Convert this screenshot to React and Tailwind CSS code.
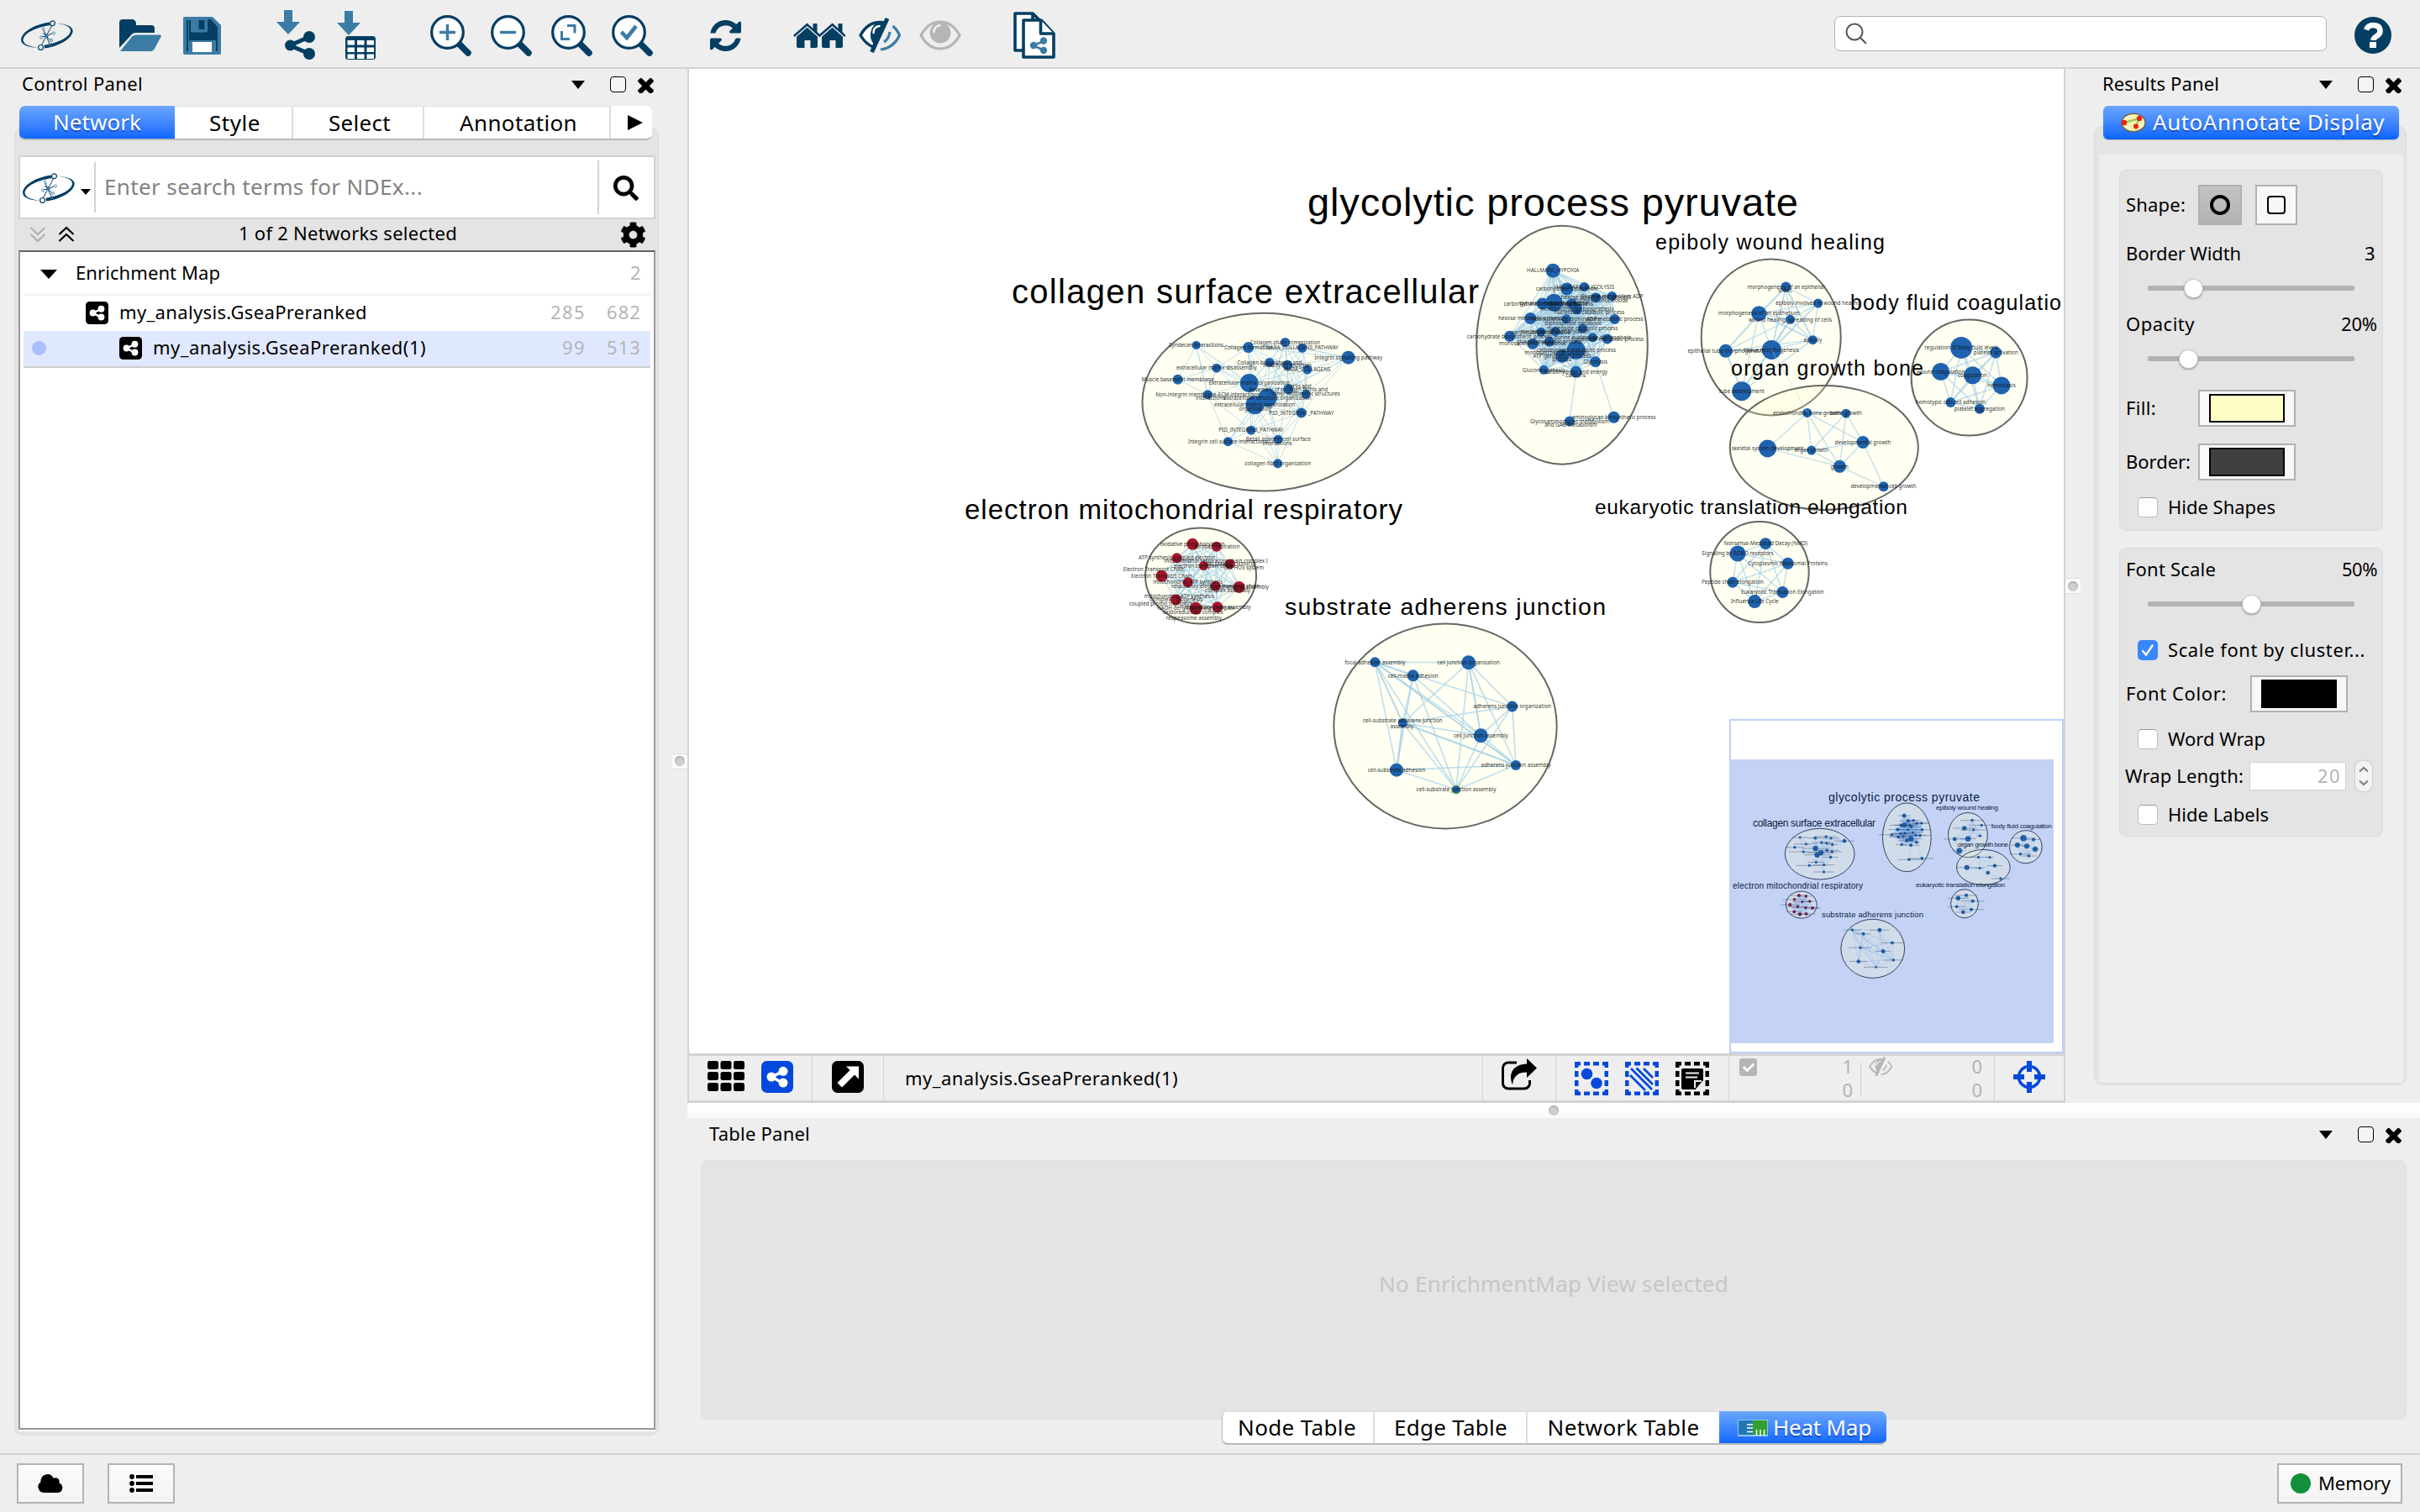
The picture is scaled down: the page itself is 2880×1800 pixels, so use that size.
import React, { useLayoutEffect, useRef, useState } from "react";
import { FaCog, FaSearch, FaCheck } from "react-icons/fa";

const NAVY = "#043e62";
const STEEL = "#3a7ca5";

/* Text whose tracking is adjusted so that it fills a given width. */
function Fit({ w, className = "", children }) {
  const ref = useRef(null);
  const [ls, setLs] = useState(0);
  useLayoutEffect(() => {
    const natural = ref.current.getBoundingClientRect().width;
    setLs((w - natural) / String(children).length);
  }, [w, children]);
  return (
    <span ref={ref} className={`inline-block shrink-0 -translate-y-px whitespace-nowrap ${className}`} style={{ letterSpacing: `${ls}px` }}>
      {children}
    </span>
  );
}

/* ---------- icons ---------- */

function CyLogo({ className = "" }) {
  return (
    <svg viewBox="0 0 64 36" width="64" height="36" className={`shrink-0 ${className}`} fill="none" stroke={NAVY}>
      <path d="M35 2.500C16 5 0 15 1.200 24.500c.6 4.500 8 8 19.500 8.300C9 31 3.500 28 3.600 23.500 4 16 18 8.500 35.500 6z" fill={NAVY} stroke="none" />
      <path d="M29 33.600C47 31 63.500 21 62.600 12 62 7.500 55 4.200 43 3.700 54.500 5 60 8 60 12.500 59.500 20 46 27 28.500 29.800z" fill={NAVY} stroke="none" />
      <circle cx="38.500" cy="3.800" r="2.900" strokeWidth="1.200" />
      <circle cx="24.500" cy="32.400" r="2.900" strokeWidth="1.200" />
      <path d="M37.500 6.800 31 19 25.500 29.500M31 19l-3-7M31 19l7-3M31 19l-5 1M31 19l5 5M31 19l4 9M31 19l-4-4" strokeWidth="1" />
      <circle cx="31.500" cy="18" r="1.800" fill={STEEL} stroke={STEEL} />
      <g strokeWidth="0.900" stroke={STEEL}>
        <circle cx="27.500" cy="10.500" r="1.400" />
        <circle cx="40" cy="15.500" r="1.500" />
        <circle cx="25" cy="20.500" r="1.500" />
        <circle cx="37" cy="24" r="1.500" />
        <circle cx="35.500" cy="29" r="1.400" />
      </g>
    </svg>
  );
}

function FolderIcon() {
  return (
    <svg viewBox="0 0 50 38" width="50" height="38" className="ml-[54px] shrink-0">
      <path d="M0 34V4a4 4 0 0 1 4-4h11a5 5 0 0 1 5 5v2h18a4 4 0 0 1 4 4v5H20a8 8 0 0 0-7 4z" fill={NAVY} />
      <path d="M1 38h37l3-1.500 9-16.500-1-1.500H19L15.500 20z" fill={STEEL} />
    </svg>
  );
}

function SaveIcon() {
  return (
    <svg viewBox="0 0 45 45" width="45" height="45" className="ml-[26px] shrink-0">
      <path d="M2 0h33l10 10v33a2 2 0 0 1-2 2H2a2 2 0 0 1-2-2V2a2 2 0 0 1 2-2z" fill={STEEL} />
      <path d="M4 4h2v37H4zM39 10l2 2v29h-2zM29 3h4l6 7v16H7V4h2v12a2.500 2.500 0 0 0 2.500 2.500h15A2.500 2.500 0 0 0 29 16z" fill={NAVY} />
      <rect x="18.500" y="4" width="7" height="11" fill={NAVY} />
      <path d="M7 26h32v2H9a2 2 0 0 0-2 2z" fill={NAVY} />
      <rect x="11" y="30" width="23" height="12" fill="#fff" />
    </svg>
  );
}

const SharePath = () => (
  <g>
    <circle cx="5.500" cy="17" r="6.500" />
    <circle cx="28" cy="7" r="7" />
    <circle cx="28" cy="27" r="7" />
    <path d="M5 17 28 7M5 17l23 10" strokeWidth="5" />
  </g>
);

function ImportNetworkIcon() {
  return (
    <svg viewBox="0 0 47 60" width="47" height="60" className="ml-[66px] shrink-0">
      <path d="M9 0h10v14h9L14 29 0 14h9z" fill={STEEL} />
      <g transform="translate(11 25)" fill={NAVY} stroke={NAVY} strokeWidth="0">
        <SharePath />
      </g>
    </svg>
  );
}

function ImportTableIcon() {
  return (
    <svg viewBox="0 0 47 60" width="47" height="60" className="ml-[25px] shrink-0">
      <path d="M9 1h10v14h9L14 30 0 15h9z" fill={STEEL} />
      <rect x="10" y="31" width="36" height="28" rx="3.500" fill={NAVY} />
      {[36, 44.5, 52.5].map((y) =>
        [12.500, 24, 35.500].map((x) => <rect key={`${x}-${y}`} x={x} y={y} width="8.500" height="5.500" fill="#fff" />)
      )}
    </svg>
  );
}

function ZoomIcon({ className, children }) {
  return (
    <svg viewBox="0 0 49 49" width="49" height="49" className={`shrink-0 ${className}`}>
      <path d="M34 34l11 11" stroke={NAVY} strokeWidth="7.500" strokeLinecap="round" />
      <circle cx="20.500" cy="20.500" r="18.800" fill="#fff" stroke={NAVY} strokeWidth="3.200" />
      <g fill="none" stroke={STEEL} strokeWidth="3.400">{children}</g>
    </svg>
  );
}

function RefreshIcon() {
  return (
    <svg viewBox="128 128 1536 1536" width="37" height="37" className="ml-[68px] shrink-0" fill={NAVY}>
      <path d="M1639 1056q0 5-1 7-64 268-268 434.500t-478 166.500q-146 0-282.500-55t-243.500-157l-129 129q-19 19-45 19t-45-19-19-45v-448q0-26 19-45t45-19h448q26 0 45 19t19 45-19 45l-137 137q71 66 161 102t187 36q134 0 250-65t186-179q11-17 53-117 8-23 30-23h192q13 0 22.500 9.500t9.500 22.500zm25-800v448q0 26-19 45t-45 19h-448q-26 0-45-19t-19-45 19-45l138-138q-148-137-349-137-134 0-250 65t-186 179q-11 17-53 117-8 23-30 23h-199q-13 0-22.500-9.500t-9.500-22.500v-7q65-268 270-434.500t480-166.500q146 0 284 55.500t245 156.500l130-129q19-19 45-19t45 19 19 45z" />
    </svg>
  );
}

function HousesIcon() {
  const house = (
    <g>
      <path d="M4 16.500 16.500 5.500 29 16.500V28q0 2-2 2h-6.500v-9h-7v9H6q-2 0-2-2z" stroke="none" />
      <path d="M.8 16 16.500 2.200 32 16" fill="none" strokeWidth="2.600" />
      <path d="M23.500 1h5v11l-5-4.500z" stroke="none" />
      <path d="M3.500 16.500 16.500 5 29.500 16.500" fill="none" stroke="#eee" strokeWidth="1" />
    </g>
  );
  return (
    <svg viewBox="0 0 62 31" width="62" height="31" className="ml-[62px] shrink-0" fill={NAVY} stroke={NAVY}>
      {house}
      <g transform="translate(30 0)">{house}</g>
    </svg>
  );
}

function EyeSlash({ size = 50, dark = NAVY, light = STEEL, bg = "#fff", className = "" }) {
  return (
    <svg viewBox="0 0 50 42" width={size} height={size * 0.84} className={`shrink-0 ${className}`} fill="none">
      <path d="M2 21C8 10 16 5.500 25 5.500q4 0 7 .8L17 35Q8 31 2 21z" fill={bg} stroke={dark} strokeWidth="3.400" />
      <path d="M33 5 20 33c-10-6-7-26 5-28z" fill={dark} />
      <path d="M17.500 18q0-7 7-8" stroke={bg} strokeWidth="2.600" strokeLinecap="round" />
      <path d="M34 1 15.500 41" stroke={dark} strokeWidth="5" />
      <path d="M40.500 10q5 4 8 11-7 15-22.500 17M37 17q-1.500 9-7 12" stroke={light} strokeWidth="3.200" />
    </svg>
  );
}

function EyeIcon() {
  return (
    <svg viewBox="0 0 50 36" width="50" height="36" className="ml-[22px] shrink-0" fill="none">
      <path d="M2 18C8 7 16 2 25 2s17 5 23 16c-6 11-14 16-23 16S8 29 2 18z" stroke="#b5b5b5" strokeWidth="3.200" />
      <circle cx="25" cy="15" r="12.500" fill="#b5b5b5" />
      <path d="M17.500 14q0-6.500 7-8" stroke="#eee" strokeWidth="2.600" strokeLinecap="round" />
    </svg>
  );
}

function DocsIcon() {
  return (
    <svg viewBox="0 0 50 56" width="50" height="56" className="ml-[62px] shrink-0" fill="#fff" stroke={NAVY} strokeWidth="3.600" strokeLinejoin="round">
      <path d="M2 2h21l9 9v35H2z" />
      <path d="M23 2v9" />
      <path d="M12 10h21l15 16v28H12z" />
      <path d="M32.500 10v16H48" />
      <g fill={STEEL} stroke={STEEL} strokeWidth="2">
        <path d="M24 40l12-5M24 40l12 6" strokeWidth="2.600" />
        <circle cx="24" cy="40" r="3.200" />
        <circle cx="36" cy="34.500" r="3.200" />
        <circle cx="36" cy="46" r="3.200" />
      </g>
    </svg>
  );
}

function HelpIcon() {
  return (
    <svg viewBox="0 0 44 44" width="44" height="44" className="ml-[33px] shrink-0">
      <circle cx="22" cy="22" r="22" fill={NAVY} />
      <path d="M14 15.500Q16 10 22 10q8.500 0 8.500 7 0 3.500-4 6-4 2.300-4 5" fill="none" stroke="#fff" strokeWidth="6.500" />
      <rect x="18" y="30" width="8" height="7" fill="#fff" />
    </svg>
  );
}

const Down = ({ w = 16, h = 10, className = "" }) => (
  <svg viewBox="0 0 16 10" width={w} height={h} preserveAspectRatio="none" className={`shrink-0 ${className}`}>
    <path d="M0 0h16L8 10z" />
  </svg>
);

const Cross = () => (
  <svg viewBox="300 318 1192 1192" width="19" height="19" className="ml-[14px] mt-[2px] shrink-0">
    <path d="M1490 1322q0 40-28 68l-136 136q-28 28-68 28t-68-28l-294-294-294 294q-28 28-68 28t-68-28l-136-136q-28-28-28-68t28-68l294-294-294-294q-28-28-28-68t28-68l136-136q28-28 68-28t68 28l294 294 294-294q28-28 68-28t68 28l136 136q28 28 28 68t-28 68l-294 294 294 294q28 28 28 68z" />
  </svg>
);

function PanelHeader({ title, w, className }) {
  return (
    <div className={`flex items-center text-[22px] ${className}`}>
      <Fit w={w}>{title}</Fit>
      <Down className="ml-auto" />
      <span className="ml-[30px] h-[19px] w-[19px] shrink-0 rounded-[4px] border-[1.500px] border-black bg-[#f4f4f4]" />
      <Cross />
    </div>
  );
}

function ShareBox({ size, color, className = "" }) {
  return (
    <svg viewBox="0 0 38 38" width={size} height={size} className={`shrink-0 ${className}`}>
      <rect width="38" height="38" rx="6.500" fill={color} />
      <g fill="#fff" stroke="#fff" strokeWidth="0">
        <path d="M12 19 26 12.500M12 19l14 7.500" strokeWidth="3.400" />
        <circle cx="12" cy="19" r="5.500" />
        <circle cx="26" cy="12.300" r="5.500" />
        <circle cx="26" cy="26" r="5.500" />
      </g>
    </svg>
  );
}

function Chevrons({ up, color, className }) {
  return (
    <svg viewBox="0 0 20 20" width="20" height="20" className={`shrink-0 ${className}`} fill="none" stroke={color} strokeWidth="2.200">
      {up ? <path d="M1.500 10 10 2l8.500 8M1.500 18 10 10l8.500 8" /> : <path d="M1.500 2 10 10l8.500-8M1.500 10l8.500 8 8.500-8" />}
    </svg>
  );
}

/* ---------- network drawing ---------- */

/* Each cluster keeps its nodes in layout units: origin x, origin y, units per pixel in x and y. */
const A = [1140, 200, 1.823, 2.8];
const B = [1860, 200, 2.529, 2.8];
const C = [1500, 680, 3, 3];

const CLUSTERS = [
  {
    ellipse: [1859, 410.7, 101.8, 142], space: A, reach: 115, weight: 1.4, color: "#1f62ad",
    nodes: [
      [1291, 342, 8.5, "HALLMARK_HYPOXIA"], [1321, 403, 7.5, "carbohydrate catabolism"], [1359, 396, 5.5, "HALLMARK_GLYCOLYSIS"],
      [1384, 432, 6, "hexose biosynthetic process"], [1419, 427, 5.5, "Glucose metabolism ADP"], [1268, 452, 7, "carbohydrate catabolic process"],
      [1293, 449, 10.5, "pyruvate metabolic process"], [1331, 452, 6, "glycolytic process"], [1343, 470, 6.5, "monosaccharide biosynthesis"],
      [1242, 501, 7, "hexose metabolic process"], [1320, 503, 5.5, "ribonucleoside diphosphate"], [1425, 504, 6, "ADP metabolic process"],
      [1355, 535, 5.5, "nucleoside catabolic process"], [1265, 547, 5.5, "carbohydrate derivative"], [1296, 545, 5.5, "nucleotide phosphorylation"],
      [1197, 561, 6.5, "carbohydrate biosynthetic process"], [1377, 565, 5.5, "purine nucleoside diphosphate"], [1409, 570, 6, "nucleotide metabolic process"],
      [1247, 586, 6.5, "monosaccharide metabolic"], [1283, 579, 6, "glucose metabolic process"], [1341, 607, 11, "carbohydrate metabolic process"],
      [1311, 627, 8, "ATP generation process"], [1383, 646, 6.5, "Glycolysis"], [1271, 673, 5.5, "Gluconeogenesis"], [1341, 680, 7, "carbohydrate and energy"],
      [1327, 844, 6, "Glycosaminoglycan metabolism"], [1423, 831, 7, "aminoglycan biosynthetic process"],
    ],
    extra: [[24, 25], [22, 26], [25, 26]], lone: [25, 26],
    notes: [
      [1370, 482, "nucleotide catabolic process"], [1330, 857, "and GAG metabolism"], [1340, 692, "carbons"], [1310, 637, "process"],
      [1300, 615, "monosaccharide catabolic"], [1395, 441, "purine ribonucleoside"], [1335, 518, "diphosphate metabolic"],
    ],
  },
  {
    ellipse: [1504, 478.6, 144.5, 105.9], space: A, reach: 72, weight: 1, color: "#1f62ad",
    nodes: [
      [517, 591, 5, "Syndecan interactions"], [630, 598, 6.5, "Collagen formation"], [710, 581, 5.5, "Collagen chain trimerization"],
      [747, 600, 5.5, "NABA_COLLAGENS_PATHWAY"], [847, 632, 8, "Integrin signalling pathway"], [676, 648, 5.5, "Collagen biosynthesis and"],
      [715, 657, 6, "modifying enzymes"], [758, 672, 5.5, "NABA_COLLAGENS"], [561, 667, 5.5, "extracellular matrix disassembly"],
      [477, 705, 6, "Muscle basement membrane"], [632, 717, 11, "Extracellular matrix organization"], [542, 755, 5.5, "Non-integrin membrane-ECM interactions"],
      [717, 738, 6, "Assembly of collagen fibrils and"], [755, 754, 5.5, "other multimeric structures"], [672, 766, 11, "extracellular structure organization"],
      [644, 790, 11, "extracellular matrix organization"], [745, 816, 6, "PID_INTEGRIN1_PATHWAY"], [636, 874, 5.5, "PID_INTEGRIN3_PATHWAY"],
      [586, 912, 5.5, "Integrin cell surface interactions"], [695, 905, 5.5, "Beta1 integrin cell surface"], [694, 985, 5.5, "collagen fibril organization"],
    ],
    extra: [[0, 11], [0, 10], [9, 10], [4, 14], [4, 15], [4, 16], [14, 20], [15, 20], [14, 18], [15, 19], [1, 15], [2, 14], [3, 4], [1, 4], [14, 19], [18, 15], [6, 4], [0, 14]],
    notes: [[548, 768, "interactions"], [693, 917, "interactions"], [740, 728, "fibrils and"], [644, 803, "organization"]],
  },
  {
    ellipse: [1429, 685.5, 66, 57], space: A, reach: 200, weight: 1.3, color: "#a8152c", miniColor: "#861d4b",
    nodes: [
      [509, 1254, 7, "oxidative phosphorylation"], [561, 1262, 6, "aerobic respiration"], [475, 1300, 6, "ATP synthesis coupled electron"], [533, 1326, 5.5, "electron transport chain"],
      [590, 1320, 6, "HALLMARK OXPHOS"], [442, 1360, 7, "Electron Transport Chain"], [499, 1381, 6, "mitochondrial ATP synthesis"], [559, 1394, 6, "respiratory electron transport chain"],
      [610, 1397, 7, "mitochondrial assembly"], [473, 1439, 6.5, "Complex I biogenesis"], [516, 1468, 7.5, "NADH dehydrogenase complex"], [563, 1464, 6.5, "respiratory chain assembly"],
    ],
    extra: [],
    notes: [
      [425, 1339, "Electron Transport Chain"], [560, 1311, "mitochondrial respiratory chain complex I"], [620, 1332, "OXPHOS system"], [480, 1428, "mitochondrial ATP synthesis"],
      [440, 1452, "coupled proton transport"], [510, 1482, "oxidoreductase complex"], [512, 1500, "respirasome assembly"], [585, 1408, "complex assembly"],
    ],
  },
  {
    ellipse: [2107.7, 401.4, 83, 93], space: B, reach: 105, weight: 1.4, color: "#1f62ad",
    nodes: [
      [671, 396, 6, "morphogenesis of an epithelial"], [768, 451, 5.500, "epiboly involved in wound healing"], [590, 485, 9, "morphogenesis of an epithelium"], [684, 505, 5.500, "wound healing, spreading of cells"],
      [752, 573, 5.500, "epiboly"], [490, 610, 8, "epithelial tube morphogenesis"], [628, 606, 11.500, "tissue morphogenesis"], [538, 744, 11.500, "tube development"],
    ],
    extra: [[0, 4], [0, 6], [1, 6], [3, 6], [2, 4], [5, 7]],
    notes: [[668, 409, "sheet"]],
  },
  {
    ellipse: [2170.8, 532.9, 112, 74], space: B, reach: 92, weight: 1.4, color: "#1f62ad",
    nodes: [
      [735, 816, 5.500, "endochondral bone growth"], [852, 818, 5.500, "bone growth"], [616, 935, 10.500, "skeletal system development"], [748, 941, 5.500, "organ growth"],
      [903, 914, 7.500, "developmental growth"], [833, 995, 7.500, "growth"], [965, 1062, 6, "developmental cell growth"],
    ],
    extra: [],
  },
  {
    ellipse: [2343.6, 449.6, 69, 69], space: B, reach: 200, weight: 1.6, color: "#1f62ad",
    nodes: [
      [1199, 599, 13, "regulation of body fluid levels"], [1303, 615, 7, "platelet activation"], [1137, 679, 10.500, "wound coagulation"], [1233, 691, 10.500, "coagulation"],
      [1320, 725, 10.500, "hemostasis"], [1167, 781, 6, "homotypic cell-cell adhesion"], [1254, 803, 6, "platelet aggregation"],
    ],
    extra: [],
  },
  {
    ellipse: [2094, 681, 58.7, 60], space: B, reach: 200, weight: 1.5, color: "#1f62ad",
    nodes: [
      [610, 1252, 7, "Nonsense-Mediated Decay (NMD)"], [526, 1285, 9.500, "Signaling by ROBO receptors"], [677, 1318, 7, "Cytoplasmic Ribosomal Proteins"],
      [511, 1381, 6.500, "Peptide chain elongation"], [661, 1414, 7, "Eukaryotic Translation Elongation"], [577, 1445, 8, "Influenza Life Cycle"],
    ],
    extra: [],
  },
  {
    ellipse: [1720, 864.5, 132.7, 122], space: C, reach: 0, weight: 1.7, color: "#1f62ad",
    nodes: [
      [409, 325, 6, "focal adhesion assembly"], [743, 326, 8.500, "cell junction organization"], [545, 373, 7, "cell-matrix adhesion"], [899, 483, 6.500, "adherens junction organization"],
      [508, 542, 5.500, ""], [787, 587, 8.500, "cell junction assembly"], [486, 710, 8, "cell-substrate adhesion"], [912, 693, 6, "adherens junction assembly"],
      [699, 780, 5, "cell-substrate junction assembly"],
    ],
    extra: [
      [0, 1], [0, 2], [0, 3], [0, 4], [0, 4], [0, 5], [0, 6], [0, 7], [0, 7], [0, 8], [1, 3], [1, 4], [1, 5], [1, 5], [1, 7], [1, 8], [2, 4], [2, 6], [2, 5], [2, 8],
      [3, 4], [3, 5], [3, 7], [3, 8], [4, 5], [4, 6], [4, 7], [4, 7], [4, 8], [5, 7], [5, 8], [6, 7], [6, 8], [7, 8], [4, 6],
    ],
    notes: [[508, 533, "cell-substrate adherens junction"], [505, 555, "assembly"]],
  },
];

function edgesOf(c, pts) {
  const list = [...c.extra];
  const lone = c.lone || [];
  for (let i = 0; i < pts.length; i++)
    for (let j = i + 1; j < pts.length; j++)
      if (!lone.includes(i) && !lone.includes(j) && Math.hypot(pts[i][0] - pts[j][0], pts[i][1] - pts[j][1]) < c.reach) list.push([i, j]);
  return list;
}

function Graph({ mini }) {
  return CLUSTERS.map((c, k) => {
    const [ox, oy, sx, sy] = c.space;
    const at = (u, v) => [ox + u / sx, oy + v / sy];
    const pts = c.nodes.map(([u, v]) => at(u, v));
    const [cx, cy, rx, ry] = c.ellipse;
    return (
      <g key={k}>
        <ellipse
          cx={cx} cy={cy} rx={mini ? rx - 3 : rx} ry={mini ? ry - 2 : ry}
          fill="#ffffc5" fillOpacity="0.22" stroke={mini ? "#1c2b4a" : "#666662"} strokeWidth={mini ? 3 : 2}
        />
        <g stroke={mini ? "#7fb0ea" : "#a6d0e6"} strokeWidth={c.weight} strokeOpacity="0.66">
          {edgesOf(c, pts).map(([a, b], i) => (
            <line key={i} x1={pts[a][0]} y1={pts[a][1]} x2={pts[b][0]} y2={pts[b][1]} />
          ))}
        </g>
        {c.nodes.map((n, i) => (
          <circle key={i} cx={pts[i][0]} cy={pts[i][1]} r={n[2]} fill={(mini && c.miniColor) || c.color} stroke={k === 7 && i === 8 ? "#7fb239" : "none"} />
        ))}
        {!mini && (
          <g fontSize="6.3" fill="#101010" fillOpacity="0.9" textAnchor="middle" fontFamily="'Noto Sans', sans-serif">
            {c.nodes.map((n, i) => n[3] && <text key={i} x={pts[i][0]} y={pts[i][1] + 2.2}>{n[3]}</text>)}
            {(c.notes || []).map(([u, v, t]) => {
              const [x, y] = at(u, v);
              return <text key={t} x={x} y={y + 2.2}>{t}</text>;
            })}
          </g>
        )}
        {mini && (
          <g stroke="#2b3a58" strokeOpacity="0.6" strokeWidth="2.600">
            {pts.map(([x, y], i) => {
              const half = (c.nodes[i][3].length || 30) * 1.55;
              return <line key={i} x1={x - half} x2={x + half} y1={y} y2={y} strokeDasharray="9 2" />;
            })}
          </g>
        )}
      </g>
    );
  });
}

/* text, x, baseline, width, size */
const LABELS = [
  ["glycolytic process pyruvate", 1556, 257, 584, 47],
  ["collagen surface extracellular", 1204, 361, 556, 40],
  ["electron mitochondrial respiratory", 1148, 617.5, 521, 33],
  ["substrate adherens junction", 1529, 731.5, 382, 28.5],
  ["epiboly wound healing", 1970, 297, 273, 25],
  ["body fluid coagulatio", 2202, 369, 251, 25],
  ["organ growth bone", 2060, 447, 229, 25],
  ["eukaryotic translation elongation", 1898, 612, 372, 24.5],
];
const MINI_LABELS = [
  ["glycolytic process pyruvate", 2176, 954, 180, 14],
  ["collagen surface extracellular", 2086, 983.5, 146, 12],
  ["electron mitochondrial respiratory", 2062, 1058, 155, 10],
  ["substrate adherens junction", 2168, 1092, 121, 9.4],
  ["epiboly wound healing", 2304, 964, 74, 8],
  ["body fluid coagulation", 2370, 986, 72, 8],
  ["organ growth bone", 2330, 1008, 60, 8],
  ["eukaryotic translation elongation", 2280, 1056, 106, 8],
];

const Labels = ({ items, fill }) => (
  <g fontFamily="'Liberation Sans', Arial, sans-serif" fill={fill}>
    {items.map(([t, x, y, w, s]) => (
      <text key={t} x={x} y={y} fontSize={s} textLength={w} lengthAdjust="spacing">{t}</text>
    ))}
  </g>
);

function NetworkCanvas() {
  return (
    <div className="relative h-[1172px] overflow-hidden bg-white">
      <svg viewBox="820 82 1636 1172" width="1636" height="1172" className="block">
        <Graph />
        <path d="M2108 416 2151 491" stroke="#a6d0e6" strokeOpacity="0.5" />
        <Labels items={LABELS} fill="#000" />
      </svg>
      <div className="absolute bottom-0 right-0 h-[398px] w-[398px] border-2 border-[#c0d0fb] bg-white">
        <div className="mt-[46px] h-[338px] w-[384px] bg-[#c4d3f5]">
          <svg viewBox="2060 904 384 338" width="384" height="338" className="block">
            <g transform="translate(1726.5 876.9) scale(0.292)">
              <Graph mini />
            </g>
            <Labels items={MINI_LABELS} fill="#0d1a3c" />
          </svg>
        </div>
      </div>
    </div>
  );
}

/* ---------- status bar under the network ---------- */

function DashedBox({ color, children, className = "" }) {
  return (
    <svg viewBox="0 0 40 40" width="40" height="40" className={`shrink-0 ${className}`}>
      <g fill={color}>
        {[0, 35.5].map((p) => (
          <g key={p}>
            <rect x="0" y={p} width="7" height="4.500" />
            <rect x="11" y={p} width="7" height="4.500" />
            <rect x="22" y={p} width="7" height="4.500" />
            <rect x="33" y={p} width="7" height="4.500" />
            <rect y="0" x={p} width="4.500" height="7" />
            <rect y="11" x={p} width="4.500" height="7" />
            <rect y="22" x={p} width="4.500" height="7" />
            <rect y="33" x={p} width="4.500" height="7" />
          </g>
        ))}
      </g>
      {children}
    </svg>
  );
}

function NetworkBar() {
  const blue = "#0549dc";
  return (
    <div className="flex h-[59px] border-y-[3px] border-[#d3d3d3]">
      <div className="flex w-[147px] items-start border-r border-[#d3d3d3] pl-[22px] pt-[6px]">
        <svg viewBox="0 0 44 36" width="44" height="36">
          {[0, 13, 26].map((y) => [0, 15.5, 31].map((x) => <rect key={`${x}-${y}`} x={x} y={y} width="13" height="10" rx="2.500" />))}
        </svg>
        <ShareBox size={38} color={blue} className="ml-[20px]" />
      </div>
      <div className="w-[85px] border-r border-[#d3d3d3] pl-[23px] pt-[6px]">
        <svg viewBox="0 0 38 38" width="38" height="38">
          <rect width="38" height="38" rx="6.500" />
          <path d="M17 6.500h15v15l-5-5L12 31.500 6.500 26 21.500 11z" fill="#fff" />
        </svg>
      </div>
      <div className="flex w-[713px] items-center border-r border-[#d3d3d3] pl-[25px] pt-[2px] text-[22px]">
        <Fit w={325}>my_analysis.GseaPreranked(1)</Fit>
      </div>
      <div className="w-[87px] border-r border-[#d3d3d3] pl-[22px] pt-[3px]">
        <svg viewBox="0 0 42 38" width="42" height="38">
          <path d="M18 5H8a6.500 6.500 0 0 0-6.500 6.500v18A6.500 6.500 0 0 0 8 36h19a6.500 6.500 0 0 0 6.500-6.500V26" fill="none" stroke="#000" strokeWidth="3" />
          <path d="M30 0l12 11.500L30 23v-6.500c-10 0-16 4-17 15C7 17 15 7 30 6.500z" />
        </svg>
      </div>
      <div className="flex w-[206px] border-r border-[#d3d3d3] pl-[22px] pt-[7px]">
        <DashedBox color={blue}>
          <circle cx="14.500" cy="14.500" r="6.800" fill={blue} />
          <circle cx="26" cy="25.500" r="6.800" fill={blue} />
        </DashedBox>
        <DashedBox color={blue} className="ml-[20px]">
          <path d="M6 16l18 18M7 8l25 25M13.500 7.500 33 27M22 8l11 11" stroke={blue} strokeWidth="2.800" />
        </DashedBox>
        <DashedBox color="#000" className="ml-[20px]">
          <path d="M9 8h22q2 0 2 2v12l-9.500 11H9q-2 0-2-2V10q0-2 2-2z" />
          <path d="M12 13.500h16M12 18.500h14M23 31v-8h8" stroke="#eee" strokeWidth="2" fill="none" />
        </DashedBox>
      </div>
      <div className="flex w-[316px] border-r border-[#d3d3d3] pl-[12px] text-[22px] leading-[28px] text-[#b3b3b3]">
        <span className="mt-[3px] flex h-[21px] w-[21px] items-center justify-center rounded-[3px] bg-[#b5b5b5] text-white">
          <FaCheck size={14} />
        </span>
        <div className="-mt-[2px] w-[114px] text-right"><div>1</div><div>0</div></div>
        <span className="mx-[9px] mt-[8px] h-[40px] w-px bg-[#d0d0d0]" />
        <EyeSlash size={28} dark="#b5b5b5" light="#b5b5b5" bg="#eee" className="mt-px" />
        <div className="-mt-[2px] w-[107px] text-right"><div>0</div><div>0</div></div>
      </div>
      <div className="flex flex-1 justify-center pt-[6px]">
        <svg viewBox="0 0 38 38" width="38" height="38">
          <circle cx="19" cy="19" r="12.500" fill="none" stroke={blue} strokeWidth="3.600" />
          <path d="M16 0h6v13h-6zM16 25h6v13h-6zM0 16h13v6H0zM25 16h13v6H25z" fill={blue} />
        </svg>
      </div>
    </div>
  );
}

/* ---------- panels ---------- */

const tabOn = "bg-linear-to-b from-[#6aa5fd] to-[#0563ff] text-white [text-shadow:0_2px_1px_rgba(0,0,60,0.35)]";

function TreeRow({ className, children, counts }) {
  return (
    <div className={`mx-[4px] flex h-[42px] items-center pb-[2px] ${className}`}>
      {children}
      <div className="ml-auto flex gap-[25px] pr-[11px] text-[#b5b5b5]">
        {counts.map(([n, w]) => <Fit key={n} w={w}>{n}</Fit>)}
      </div>
    </div>
  );
}

function ControlPanel() {
  const tab = "border-r-2 border-t border-[#dedede] pl-[4px] text-center leading-[40px]";
  return (
    <div className="w-[799px]">
      <PanelHeader title="Control Panel" w={144} className="h-[35px] pl-[26px] pr-[21px]" />
      <div className="ml-[17px] mt-[33px] h-[1558px] w-[767px] rounded-[10px] border border-[#dcdcdc] bg-[#e4e4e4]">
        <div className="relative -mt-[26px] ml-[5px] flex h-[41px] w-[753px] overflow-hidden rounded-[7px] border-b-2 border-[#b8b8b8] bg-white text-[26px] leading-[41px]">
          <div className={`h-[41px] w-[185px] shrink-0 text-center ${tabOn}`}><Fit w={105}>Network</Fit></div>
          <div className={`w-[141px] ${tab}`}><Fit w={61}>Style</Fit></div>
          <div className={`w-[156px] ${tab}`}><Fit w={74}>Select</Fit></div>
          <div className={`w-[222px] ${tab}`}><Fit w={140}>Annotation</Fit></div>
          <div className="flex flex-1 items-center justify-center">
            <svg viewBox="0 0 18 18" width="18" height="18" className="ml-[8px]"><path d="M0 0l18 9L0 18z" /></svg>
          </div>
        </div>
        <div className="ml-[4px] mt-[18px] flex h-[76px] w-[758px] items-center border-2 border-[#d2d2d2] bg-white">
          <CyLogo className="ml-[2px] mt-[2px]" />
          <Down w={12} h={7} className="ml-[6px] mt-[10px]" />
          <span className="ml-[4px] h-[60px] w-[2px] bg-[#d3d3d3]" />
          <Fit w={379} className="ml-[10px] text-[26px] text-[#828282]">Enter search terms for NDEx...</Fit>
          <span className="ml-auto h-[64px] w-[2px] bg-[#d3d3d3]" />
          <FaSearch size={30} className="ml-[17px] mr-[18px] mt-[2px]" />
        </div>
        <div className="ml-[4px] flex h-[37px] w-[758px] items-center text-[22px]">
          <Chevrons color="#b0b0b0" className="-mt-[2px] ml-[13px]" />
          <Chevrons up color="#000" className="-mt-[2px] ml-[14px]" />
          <Fit w={260} className="-mt-[3px] ml-[195px]">1 of 2 Networks selected</Fit>
          <FaCog size={31} className="ml-auto mr-[11px]" />
        </div>
        <div className="ml-[4px] h-[1406px] w-[758px] bg-white">
          <div className="h-[1404px] border-2 border-[#999] border-t-[#636363] text-[22px]">
            <TreeRow className="h-[52px]! border-b-2 border-[#f2f2f2] pb-0!" counts={[["2", 13]]}>
              <Down w={20} h={11} className="ml-[20px] mt-[2px]" />
              <Fit w={172} className="ml-[22px]">Enrichment Map</Fit>
            </TreeRow>
            <TreeRow counts={[["285", 42], ["682", 41]]}>
              <ShareBox size={27} color="#000" className="ml-[74px]" />
              <Fit w={295} className="ml-[13px]">my_analysis.GseaPreranked</Fit>
            </TreeRow>
            <TreeRow className="h-[44px]! border-b-2 border-[#ccc] bg-[#e0e8ff]" counts={[["99", 28], ["513", 41]]}>
              <span className="ml-[10px] h-[17px] w-[17px] rounded-full bg-[#a9c0fb]" />
              <ShareBox size={27} color="#000" className="ml-[87px]" />
              <Fit w={325} className="ml-[13px]">my_analysis.GseaPreranked(1)</Fit>
            </TreeRow>
          </div>
        </div>
      </div>
    </div>
  );
}

function Handle() {
  return (
    <span className="flex h-[19px] w-[18px] items-center justify-center border-y border-[#ddd] bg-[#fbfbfb]">
      <span className="h-[12px] w-[12px] rounded-full bg-[#cfcfcf] shadow-[inset_0_1px_2px_#999]" />
    </span>
  );
}

function Slider({ className, children }) {
  return (
    <div className={`ml-[33px] flex h-[24px] w-[246px] items-center ${className}`}>
      <div className="flex h-[6px] w-full items-center rounded-[2px] bg-[#b2b2b2]">{children}</div>
    </div>
  );
}
const knob = "h-[23px] w-[23px] rounded-full border border-[#c8c8c8] bg-white shadow-[0_1px_2px_rgba(0,0,0,0.35)]";

function Check({ on, label, w, className }) {
  return (
    <div className={`ml-[21px] flex h-[24px] items-center ${className}`}>
      {on ? (
        <span className="flex h-[24px] w-[24px] shrink-0 items-center justify-center rounded-[5px] bg-[#3a87fd]">
          <svg viewBox="0 0 14 14" width="14" height="14" fill="none" stroke="#fff" strokeWidth="2.400" strokeLinecap="round"><path d="M1 8l4 4.500L12.500 1.500" /></svg>
        </span>
      ) : (
        <span className="h-[24px] w-[24px] shrink-0 rounded-[5px] border border-[#bbb] border-t-[#999] bg-white" />
      )}
      <Fit w={w} className="ml-[12px]">{label}</Fit>
    </div>
  );
}

function Swatch({ className, fill }) {
  return (
    <span className={`flex h-[44px] w-[116px] items-start justify-center border-2 border-[#b1b1b1] bg-[#f8f8f8] pt-[3px] ${className}`}>
      <span className={`h-[34px] w-[90px] border-2 border-black ${fill}`} />
    </span>
  );
}

function ResultsPanel() {
  const group = "ml-[24px] w-[314px] rounded-[8px] border border-[#dbdbdb] bg-[#e4e4e4]";
  return (
    <div className="w-[404px] text-[22px]">
      <PanelHeader title="Results Panel" w={139} className="h-[37px] pl-[26px] pr-[22px]" />
      <div className="ml-[16px] mt-[31px] h-[1142px] w-[372px] rounded-[10px] border border-[#dcdcdc] bg-[#e4e4e4]">
        <div className={`relative -mt-[25px] ml-[10px] flex h-[40px] w-[352px] items-center rounded-[6px] text-[26px] shadow-[0_1px_1px_rgba(0,0,0,0.2)] ${tabOn}`}>
          <svg viewBox="0 0 30 24" width="30" height="24" className="ml-[21px]">
            <ellipse cx="15" cy="12" rx="14" ry="10.800" fill="#f8f3b4" stroke="#6b6152" strokeWidth="1.400" />
            <path d="M4 12 22 7M22 7l-4 9" stroke="#8ed05a" strokeWidth="2.400" />
            <circle cx="4" cy="12" r="3.200" fill="#ee2211" />
            <circle cx="22" cy="7" r="3.200" fill="#ee2211" />
            <circle cx="18" cy="16.500" r="3" fill="#ee2211" />
          </svg>
          <Fit w={276} className="ml-[8px]">AutoAnnotate Display</Fit>
        </div>
        <div className="ml-[5px] mt-[18px] h-[1104px] w-[362px] bg-[#eeeeee] pt-[18px]">
          <div className={`h-[430px] ${group}`}>
            <div className="mt-[17px] flex h-[48px] items-center pl-[7px]">
              <Fit w={71}>Shape:</Fit>
              <span className="ml-[15px] flex h-[48px] w-[52px] items-center justify-center border-2 border-[#b1b1b1] bg-linear-to-b from-[#c3c3c3] to-[#b3b3b3]">
                <span className="h-[24px] w-[24px] rounded-full border-[4px] border-black" />
              </span>
              <span className="ml-[16px] flex h-[48px] w-[50px] items-center justify-center border-2 border-[#b1b1b1] bg-[#f8f8f8]">
                <span className="h-[22px] w-[22px] rounded-[4px] border-2 border-black" />
              </span>
            </div>
            <div className="mt-[19px] flex h-[30px] items-center pl-[7px] pr-[8px]"><Fit w={137}>Border Width</Fit><Fit w={13} className="ml-auto">3</Fit></div>
            <Slider className="mt-[14px]"><span className={`ml-[43px] ${knob}`} /></Slider>
            <div className="mt-[16px] flex h-[30px] items-center pl-[7px] pr-[6px]"><Fit w={82}>Opacity</Fit><Fit w={43} className="ml-auto">20%</Fit></div>
            <Slider className="mt-[14px]"><span className={`ml-[37px] ${knob}`} /></Slider>
            <div className="mt-[25px] flex h-[44px] items-center pl-[7px]"><Fit w={36}>Fill:</Fit><Swatch className="ml-[50px]" fill="bg-[#ffffc5]" /></div>
            <div className="mt-[20px] flex h-[44px] items-center pl-[7px]"><Fit w={77}>Border:</Fit><Swatch className="ml-[9px]" fill="bg-[#404040]" /></div>
            <Check className="mt-[20px]" label="Hide Shapes" w={128} />
          </div>
          <div className={`mt-[20px] h-[344px] ${group}`}>
            <div className="mt-[10px] flex h-[30px] items-center pl-[7px] pr-[6px]"><Fit w={107}>Font Scale</Fit><Fit w={42} className="ml-auto">50%</Fit></div>
            <Slider className="mt-[14px]"><span className={`ml-[112px] ${knob}`} /></Slider>
            <Check on className="mt-[31px]" label="Scale font by cluster..." w={235} />
            <div className="mt-[18px] flex h-[44px] items-center pl-[7px]"><Fit w={120}>Font Color:</Fit><Swatch className="ml-[28px]" fill="bg-black" /></div>
            <Check className="mt-[20px]" label="Word Wrap" w={116} />
            <div className="mt-[14px] flex h-[36px] items-center pl-[6px]">
              <Fit w={141}>Wrap Length:</Fit>
              <span className="ml-[7px] h-[34px] w-[115px] border border-[#d2d2d2] bg-white pr-[5px] text-right leading-[32px] text-[#b5b5b5]"><Fit w={28}>20</Fit></span>
              <svg viewBox="0 0 20 36" width="20" height="36" className="ml-[11px] rounded-[8px] bg-[#f3f3f3] shadow-[0_0_2px_#999]" fill="none" stroke="#808080" strokeWidth="2.200">
                <path d="M5 12.500 10 8l5 4.500M5 23.500l5 4.500 5-4.500" />
              </svg>
            </div>
            <Check className="mt-[16px]" label="Hide Labels" w={120} />
          </div>
        </div>
      </div>
    </div>
  );
}

function TablePanel() {
  const tab = "border-r-2 border-t border-[#dedede] text-center leading-[38px]";
  return (
    <div>
      <PanelHeader title="Table Panel" w={120} className="h-[39px] pl-[26px] pr-[22px]" />
      <div className="ml-[16px] mt-[11px] flex h-[309px] w-[2030px] items-center justify-center rounded-[8px] border border-[#dedede] bg-[#e4e4e4]">
        <Fit w={416} className="-mt-[13px] text-[26px] text-[#c6c6c6]">No EnrichmentMap View selected</Fit>
      </div>
      <div className="relative -mt-[10px] ml-[636px] flex h-[40px] w-[791px] overflow-hidden rounded-[7px] border-b-2 border-l border-[#b8b8b8] bg-white text-[26px]">
        <div className={`w-[181px] pr-[2px] ${tab}`}><Fit w={141}>Node Table</Fit></div>
        <div className={`w-[182px] pl-px ${tab}`}><Fit w={135}>Edge Table</Fit></div>
        <div className="w-[228px] border-t border-[#dedede] text-center leading-[38px]"><Fit w={181}>Network Table</Fit></div>
        <div className={`flex h-[40px] flex-1 items-center ${tabOn}`}>
          <svg viewBox="0 0 36 20" width="36" height="20" className="ml-[22px]">
            <rect width="36" height="20" fill="#8fc7e6" />
            <rect x="1" y="1" width="17" height="17" fill="#1f78b4" />
            <rect x="18" y="1" width="17" height="17" fill="#33a02c" />
            <path d="M11 6h7M11 10h7M11 14.500h7M22.500 19v-7M27 19v-7M31.500 19v-7" stroke="#fff" strokeWidth="1.500" />
          </svg>
          <Fit w={117} className="ml-[6px]">Heat Map</Fit>
        </div>
      </div>
    </div>
  );
}

export default function App() {
  const btn = "flex h-[48px] items-center border-2 border-[#b3b3b3] bg-linear-to-b from-[#fbfbfb] to-[#f4f4f4]";
  return (
    <div className="flex h-[1800px] w-[2880px] flex-col overflow-hidden bg-[#eeeeee] font-['Noto_Sans',sans-serif] text-black">
      <div className="flex h-[82px] shrink-0 items-center border-b-2 border-[#d3d3d3] pt-[4px]">
        <CyLogo className="ml-[24px]" />
        <FolderIcon />
        <SaveIcon />
        <ImportNetworkIcon />
        <ImportTableIcon />
        <ZoomIcon className="ml-[64px]"><path d="M11 20.500h19M20.500 11v19" /></ZoomIcon>
        <ZoomIcon className="ml-[23px]"><path d="M11 20.500h19" /></ZoomIcon>
        <ZoomIcon className="ml-[23px]"><path d="M19 12.500h9v9M12.500 19v9.500h9.500" strokeWidth="3" /></ZoomIcon>
        <ZoomIcon className="ml-[23px]"><path d="M11.500 20l6.500 7 11-14" strokeWidth="4.600" /></ZoomIcon>
        <RefreshIcon />
        <HousesIcon />
        <EyeSlash className="ml-[16px]" />
        <EyeIcon />
        <DocsIcon />
        <div className="-mt-[4px] ml-auto flex h-[42px] w-[586px] items-center rounded-[7px] border border-[#b3b3b3] bg-white">
          <svg viewBox="0 0 26 26" width="26" height="26" className="ml-[12px]" fill="none" stroke="#555" strokeWidth="2"><circle cx="11" cy="11" r="9.500" /><path d="M18 18l7 7" /></svg>
        </div>
        <HelpIcon />
        <span className="w-[34px] shrink-0" />
      </div>

      <div className="flex h-[1648px] shrink-0">
        <div className="pt-px"><ControlPanel /></div>
        <div className="flex w-[19px] items-center justify-center"><Handle /></div>
        <div className="flex w-[2062px] flex-col">
          <div className="flex h-[1231px]">
            <div className="w-[1640px] border-x-2 border-[#d3d3d3]">
              <NetworkCanvas />
              <NetworkBar />
            </div>
            <div className="flex w-[18px] items-center"><Handle /></div>
            <ResultsPanel />
          </div>
          <div className="flex h-[18px] items-center justify-center bg-linear-to-b from-white to-[#fafafa]">
            <span className="h-[12px] w-[12px] rounded-full bg-[#cfcfcf] shadow-[inset_0_1px_2px_#999]" />
          </div>
          <TablePanel />
        </div>
      </div>

      <div className="flex flex-1 items-start border-t-2 border-[#d3d3d3] pt-[10px] text-[22px]">
        <div className={`ml-[20px] w-[80px] justify-center ${btn}`}>
          <svg viewBox="0 0 30 22" width="30" height="22"><path d="M7 22a7 7 0 0 1-3.500-12.800A8 8 0 0 1 11.500 0a8 8 0 0 1 7.300 4.900 4.500 4.500 0 0 1 6.500 5.500A6 6 0 0 1 24 22z" /></svg>
        </div>
        <div className={`ml-[28px] w-[80px] justify-center ${btn}`}>
          <svg viewBox="0 0 28 22" width="28" height="22">
            {[3, 11, 19].map((y) => <g key={y}><circle cx="3" cy={y} r="2.900" /><rect x="8" y={y - 2} width="20" height="4" /></g>)}
          </svg>
        </div>
        <div className={`ml-auto mr-[21px] w-[149px] ${btn}`}>
          <span className="ml-[14px] h-[24px] w-[24px] rounded-full bg-[#12903c]" />
          <Fit w={86} className="ml-[9px]">Memory</Fit>
        </div>
      </div>
    </div>
  );
}
